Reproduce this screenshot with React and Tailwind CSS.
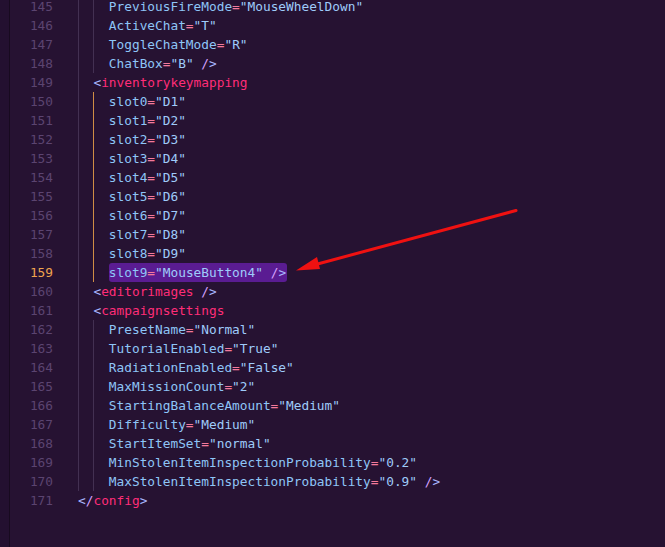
import React from 'react';

const C = {
  attr: 'text-[#8ec5f7]',
  eq: 'text-[#f47a9c]',
  str: 'text-[#9fcbfa]',
  tag: 'text-[#ff2d78]',
  br: 'text-[#a9b7ff]',
  sl: 'text-[#d7a2ff]',
};

const attr = (name, value, close) => (
  <>
    <span className={C.attr}>{name}</span>
    <span className={C.eq}>=</span>
    <span className={C.str}>"{value}"</span>
    {close && (
      <>
        {' '}
        <span className={C.sl}>/</span>
        <span className={C.br}>&gt;</span>
      </>
    )}
  </>
);

const open = (name, selfClose) => (
  <>
    <span className={C.br}>&lt;</span>
    <span className={C.tag}>{name}</span>
    {selfClose && (
      <>
        {' '}
        <span className={C.sl}>/</span>
        <span className={C.br}>&gt;</span>
      </>
    )}
  </>
);

// guides: one char per indent cell ('g' gray, 'o' orange)
const lines = [
  { n: 145, g: 'gg', c: attr('PreviousFireMode', 'MouseWheelDown') },
  { n: 146, g: 'gg', c: attr('ActiveChat', 'T') },
  { n: 147, g: 'gg', c: attr('ToggleChatMode', 'R') },
  { n: 148, g: 'gg', c: attr('ChatBox', 'B', true) },
  { n: 149, g: 'g', c: open('inventorykeymapping') },
  { n: 150, g: 'go', c: attr('slot0', 'D1') },
  { n: 151, g: 'go', c: attr('slot1', 'D2') },
  { n: 152, g: 'go', c: attr('slot2', 'D3') },
  { n: 153, g: 'go', c: attr('slot3', 'D4') },
  { n: 154, g: 'go', c: attr('slot4', 'D5') },
  { n: 155, g: 'go', c: attr('slot5', 'D6') },
  { n: 156, g: 'go', c: attr('slot6', 'D7') },
  { n: 157, g: 'go', c: attr('slot7', 'D8') },
  { n: 158, g: 'go', c: attr('slot8', 'D9') },
  { n: 159, g: 'go', c: attr('slot9', 'MouseButton4', true), active: true },
  { n: 160, g: 'g', c: open('editorimages', true) },
  { n: 161, g: 'g', c: open('campaignsettings') },
  { n: 162, g: 'gg', c: attr('PresetName', 'Normal') },
  { n: 163, g: 'gg', c: attr('TutorialEnabled', 'True') },
  { n: 164, g: 'gg', c: attr('RadiationEnabled', 'False') },
  { n: 165, g: 'gg', c: attr('MaxMissionCount', '2') },
  { n: 166, g: 'gg', c: attr('StartingBalanceAmount', 'Medium') },
  { n: 167, g: 'gg', c: attr('Difficulty', 'Medium') },
  { n: 168, g: 'gg', c: attr('StartItemSet', 'normal') },
  { n: 169, g: 'gg', c: attr('MinStolenItemInspectionProbability', '0.2') },
  { n: 170, g: 'gg', c: attr('MaxStolenItemInspectionProbability', '0.9', true) },
  {
    n: 171,
    g: '',
    c: (
      <>
        <span className={C.br}>&lt;</span>
        <span className={C.sl}>/</span>
        <span className={C.tag}>config</span>
        <span className={C.br}>&gt;</span>
      </>
    ),
  },
];

export default function App() {
  return (
    <div
      className="relative w-[665px] h-[547px] overflow-hidden bg-[#261232] flex"
      style={{ fontFamily: '"DejaVu Sans Mono", "Liberation Mono", monospace' }}
    >
      {/* left edge */}
      <div className="w-[10px] shrink-0 border-r border-[#170a1f] bg-[#231030]" />

      <div className="flex-1 -mt-[3.5px] text-[12.8px]">
        {lines.map((l) => (
          <div key={l.n} className="flex h-[19px] items-center leading-[19px]">
            <div
              className={`w-[43px] shrink-0 text-right ${
                l.active ? 'text-[#f0a44e]' : 'text-[#5b4470]'
              }`}
            >
              {l.n}
            </div>
            <div className="w-[25px] shrink-0" />
            {l.g.split('').map((g, i) => (
              <div
                key={i}
                className={`w-[2ch] h-[19px] shrink-0 border-l ${
                  g === 'o' ? 'border-[#d08d45]' : 'border-[#433052]'
                }`}
              />
            ))}
            <div className="whitespace-pre">
              {l.active ? (
                <span className="inline-block h-[19px] rounded-[3px] bg-[#5a1c92] pr-[1px]">
                  {l.c}
                </span>
              ) : (
                l.c
              )}
            </div>
          </div>
        ))}
      </div>

      {/* annotation arrow */}
      <svg
        className="absolute left-0 top-0 pointer-events-none"
        width="665"
        height="547"
        viewBox="0 0 665 547"
      >
        <line x1="516" y1="210.5" x2="312" y2="265.5" stroke="#ef1111" strokeWidth="3" strokeLinecap="round" />
        <polygon points="296,270.5 317,257 320,269" fill="#ef1111" />
      </svg>
    </div>
  );
}
